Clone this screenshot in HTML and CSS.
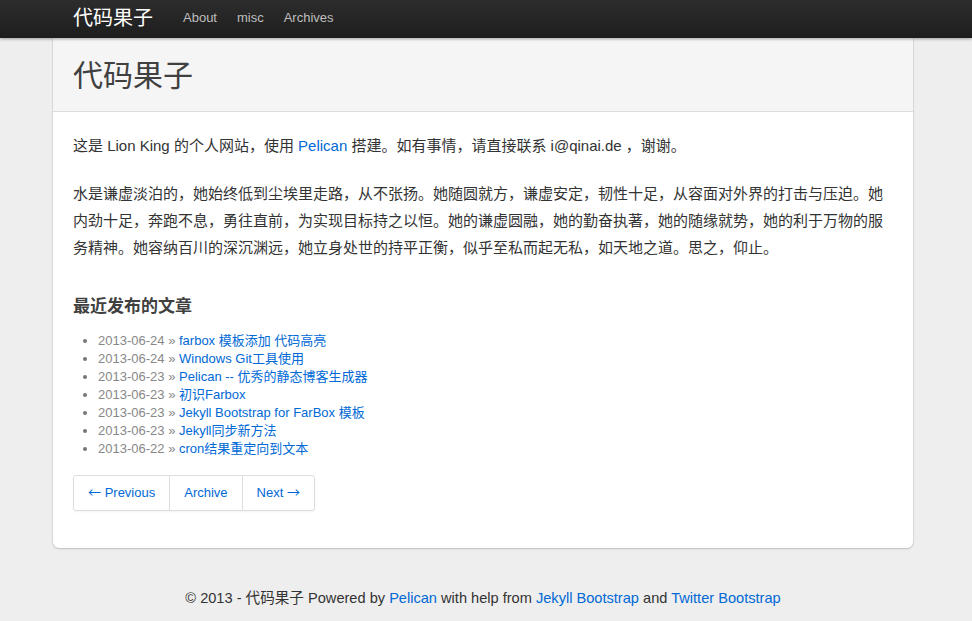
FILE: index.html
```html
<!DOCTYPE html>
<html lang="zh">
<head>
<meta charset="utf-8">
<title>代码果子</title>
<link rel="stylesheet" href="styles.css">
</head>
<body>
<div class="topbar">
  <div class="wrap">
    <div class="container nav-inner">
      <a class="brand" href="#">代码果子</a>
      <ul class="nav">
        <li><a href="#">About</a></li>
        <li><a href="#">misc</a></li>
        <li><a href="#">Archives</a></li>
      </ul>
    </div>
  </div>
</div>
<div class="wrap">
  <div class="container content">
    <div class="page-header">
      <h1>代码果子</h1>
    </div>
    <div class="body">
      <p>这是 Lion King 的个人网站，使用 <a href="#">Pelican</a> 搭建。如有事情，请直接联系 i@qinai.de ，谢谢。</p>
      <p>水是谦虚淡泊的，她始终低到尘埃里走路，从不张扬。她随圆就方，谦虚安定，韧性十足，从容面对外界的打击与压迫。她内劲十足，奔跑不息，勇往直前，为实现目标持之以恒。她的谦虚圆融，她的勤奋执著，她的随缘就势，她的利于万物的服务精神。她容纳百川的深沉渊远，她立身处世的持平正衡，似乎至私而起无私，如天地之道。思之，仰止。</p>
      <h3>最近发布的文章</h3>
      <ul class="posts">
        <li><span class="date">2013-06-24</span> <span class="raquo">&raquo;</span> <a href="#">farbox 模板添加 代码高亮</a></li>
        <li><span class="date">2013-06-24</span> <span class="raquo">&raquo;</span> <a href="#">Windows Git工具使用</a></li>
        <li><span class="date">2013-06-23</span> <span class="raquo">&raquo;</span> <a href="#">Pelican -- 优秀的静态博客生成器</a></li>
        <li><span class="date">2013-06-23</span> <span class="raquo">&raquo;</span> <a href="#">初识Farbox</a></li>
        <li><span class="date">2013-06-23</span> <span class="raquo">&raquo;</span> <a href="#">Jekyll Bootstrap for FarBox 模板</a></li>
        <li><span class="date">2013-06-23</span> <span class="raquo">&raquo;</span> <a href="#">Jekyll同步新方法</a></li>
        <li><span class="date">2013-06-22</span> <span class="raquo">&raquo;</span> <a href="#">cron结果重定向到文本</a></li>
      </ul>
      <div class="pagination">
        <a href="#"><span class="arrow">&larr;</span> Previous</a><a href="#">Archive</a><a href="#">Next <span class="arrow">&rarr;</span></a>
      </div>
    </div>
  </div>
  <footer class="footer">
    <p>&copy; 2013 - 代码果子 Powered by <a href="#">Pelican</a> with help from <a href="#">Jekyll Bootstrap</a> and <a href="#">Twitter Bootstrap</a></p>
  </footer>
</div>
</body>
</html>
```

FILE: styles.css
```css
html, body {
  margin: 0;
  padding: 0;
}
body {
  background: #eeeeee;
  color: #333333;
  font-family: "Liberation Sans", Arial, "Noto Sans CJK SC", sans-serif;
  font-size: 13px;
  line-height: 18px;
}
a {
  color: #0069d6;
  text-decoration: none;
}
.wrap {
  padding-right: 6px;
}
.container {
  width: 860px;
  margin: 0 auto;
}
.topbar {
  height: 38px;
  background: linear-gradient(#2c2c2c, #1e1e1e);
  box-shadow: 0 1px 3px rgba(0, 0, 0, 0.35);
  position: relative;
  z-index: 2;
}
.nav-inner {
  display: flex;
  align-items: center;
  height: 38px;
}
.brand {
  color: #ffffff;
  font-size: 20px;
  line-height: 20px;
  padding: 0 20px;
  margin-top: -3px;
}
.nav {
  list-style: none;
  margin: -4px 0 0;
  padding: 0;
  display: flex;
}
.nav a {
  display: block;
  color: #bfbfbf;
  font-size: 13px;
  line-height: 19px;
  padding: 0 10px;
}
.content {
  background: #ffffff;
  border-radius: 0 0 6px 6px;
  box-shadow: 0 1px 2px rgba(0, 0, 0, 0.15), 0 0 0 1px rgba(0, 0, 0, 0.05);
  position: relative;
  z-index: 1;
}
.page-header {
  background: #f5f5f5;
  border-bottom: 1px solid #dddddd;
  padding: 21px 20px 18px;
}
.page-header h1 {
  margin: 0;
  font-size: 30px;
  line-height: 34px;
  font-weight: normal;
  color: #404040;
  font-family: "Liberation Serif", "Noto Sans CJK SC", serif;
}
.body {
  padding: 20px 20px 20px;
}
.body p {
  margin: 0 0 21px;
  font-size: 15px;
  line-height: 27px;
}
.body h3 {
  margin: 32px 0 0;
  font-size: 17px;
  line-height: 27px;
  font-weight: bold;
  color: #404040;
}
.posts {
  margin: 12px 0 17px;
  padding-left: 25px;
  color: #777777;
}
.posts li {
  line-height: 18px;
}
.date, .raquo {
  color: #888888;
}
.pagination {
  display: inline-flex;
  border: 1px solid #dddddd;
  border-radius: 3px;
  box-shadow: 0 1px 2px rgba(0, 0, 0, 0.05);
  margin-bottom: 17px;
}
.pagination a {
  line-height: 34px;
  padding: 0 14px;
  border-right: 1px solid #dddddd;
}
.pagination a:last-child {
  border-right: 0;
}
.arrow {
  font-family: "Noto Sans CJK SC", sans-serif;
  font-size: 13px;
  line-height: 1;
}
.footer {
  margin-top: 40px;
  text-align: center;
}
.footer p {
  margin: 0;
  font-size: 14.6px;
  line-height: 20px;
}
```
